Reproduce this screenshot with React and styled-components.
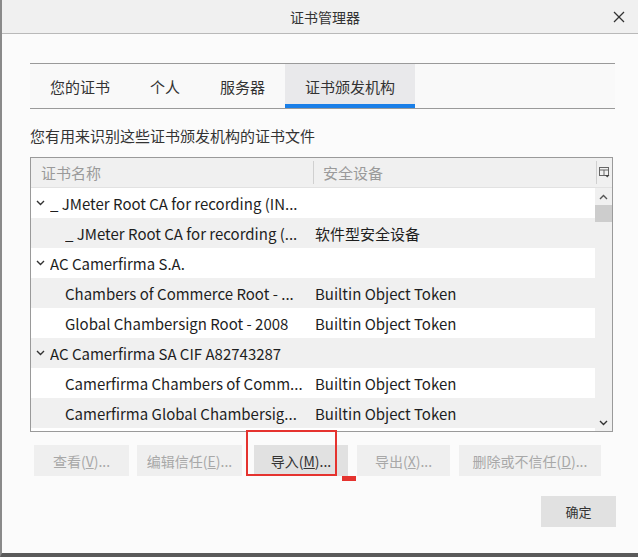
import React from "react";
import styled, { createGlobalStyle } from "styled-components";

const GlobalStyle = createGlobalStyle`
  html, body {
    margin: 0;
    padding: 0;
    background: #fbfbfb;
  }
  * {
    box-sizing: border-box;
  }
`;

const FONT = `"Noto Sans CJK SC", "Noto Sans", sans-serif`;

const Window = styled.div`
  position: relative;
  width: 638px;
  height: 557px;
  display: flex;
  flex-direction: column;
  background: #fbfbfb;
  border-left: 2px solid #8a8a8a;
  border-bottom: 4px solid #5a5a5a;
  font-family: ${FONT};
  color: #333;
  overflow: hidden;
`;

const TitleBar = styled.div`
  height: 34px;
  flex-shrink: 0;
  display: flex;
  align-items: center;
  background: #f0f0f0;
  border-bottom: 1px solid #b9b9b9;
  padding: 0 12px 0 36px;
`;

const Title = styled.div`
  flex: 1;
  text-align: center;
  font-size: 14px;
  color: #333;
`;

const CloseBtn = styled.div`
  width: 14px;
  height: 14px;
  display: flex;
  align-items: center;
  justify-content: center;
`;

const Body = styled.div`
  flex: 1;
  display: flex;
  flex-direction: column;
  padding: 29px 22px 0 28px;
`;

const TabBar = styled.div`
  display: flex;
  height: 46px;
  border-top: 1px solid #9a9a9a;
  border-bottom: 1px solid #9a9a9a;
  background: #f9f9f9;
  margin-right: 1px;
`;

const Tab = styled.div`
  display: flex;
  align-items: center;
  padding: 0 20px;
  font-size: 15px;
  color: #333;
  background: ${(p) => (p.$active ? "#e9e9eb" : "transparent")};
  border-bottom: 4px solid ${(p) => (p.$active ? "#1a7fe8" : "transparent")};
  padding-top: 4px;
`;

const Desc = styled.div`
  margin-top: 16px;
  font-size: 15px;
  line-height: 22px;
  color: #333;
`;

const Tree = styled.div`
  margin-top: 10px;
  width: 583px;
  height: 275px;
  border: 1px solid #9a9a9a;
  background: #fff;
  display: flex;
  flex-direction: column;
  overflow: hidden;
`;

const Header = styled.div`
  height: 30px;
  flex-shrink: 0;
  display: grid;
  grid-template-columns: 283px 283px 15px;
  background: #f0f0f0;
  border-bottom: 1px solid #e2e2e2;
`;

const HeaderCell = styled.div`
  display: flex;
  align-items: center;
  padding-left: ${(p) => p.$pad}px;
  font-size: 15px;
  color: #9a9a9a;
  border-right: ${(p) => (p.$sep ? "1px solid #d0d0d0" : "none")};
  margin: 3px 0;
`;

const PickerCell = styled.div`
  display: flex;
  align-items: center;
  justify-content: center;
`;

const TreeBody = styled.div`
  flex: 1;
  display: flex;
  overflow: hidden;
`;

const Rows = styled.div`
  flex: 1;
  display: flex;
  flex-direction: column;
`;

const Row = styled.div`
  height: 30px;
  flex-shrink: 0;
  display: grid;
  grid-template-columns: 282px 1fr;
  align-items: center;
  background: ${(p) => (p.$odd ? "#f0f0f0" : "#fff")};
  font-size: 15px;
  color: #1e1e1e;
`;

const NameCell = styled.div`
  display: flex;
  align-items: center;
  gap: 5px;
  padding-left: ${(p) => (p.$group ? 5 : 34)}px;
  white-space: nowrap;
  overflow: hidden;
`;

const NameText = styled.span`
  overflow: hidden;
  text-overflow: ellipsis;
`;

const DeviceCell = styled.div`
  padding-left: 2px;
  white-space: nowrap;
`;

const ScrollBar = styled.div`
  width: 17px;
  flex-shrink: 0;
  background: #f0f0f0;
  display: flex;
  flex-direction: column;
  align-items: center;
`;

const ScrollArrow = styled.div`
  height: 17px;
  width: 100%;
  display: flex;
  align-items: center;
  justify-content: center;
`;

const Thumb = styled.div`
  width: 100%;
  height: 17px;
  background: #cdcdcd;
`;

const ScrollSpacer = styled.div`
  flex: 1;
`;

const ButtonRow = styled.div`
  position: relative;
  display: flex;
  margin-top: 13px;
  margin-left: 4px;
`;

const Button = styled.div`
  width: ${(p) => p.$w}px;
  margin-right: ${(p) => p.$gap}px;
  height: 31px;
  display: flex;
  align-items: center;
  justify-content: center;
  font-size: 14px;
  color: ${(p) => (p.$disabled ? "#a8a8a8" : "#333")};
  background: ${(p) => (p.$disabled ? "#efefef" : "#e1e1e1")};
  white-space: nowrap;
`;

const Key = styled.span`
  text-decoration: underline;
`;

const Mark = styled.div`
  position: absolute;
  left: 212px;
  top: -15px;
  width: 91px;
  height: 46px;
  border: 2px solid #e5332f;
`;

const MarkDot = styled.div`
  position: absolute;
  left: 308px;
  top: 31px;
  width: 14px;
  height: 5px;
  background: #e5332f;
`;

const Footer = styled.div`
  display: flex;
  justify-content: flex-end;
  margin-top: 20px;
`;

const OkButton = styled.div`
  width: 75px;
  height: 31px;
  display: flex;
  align-items: center;
  justify-content: center;
  background: #e1e1e1;
  font-size: 13px;
  color: #333;
`;

const Chevron = ({ dir = "down" }) => (
  <svg width="9" height="6" viewBox="0 0 9 6">
    <polyline
      points={dir === "down" ? "1,1 4.5,4.5 8,1" : "1,5 4.5,1.5 8,5"}
      fill="none"
      stroke={dir === "down" ? "#333" : "#555"}
      strokeWidth="1.4"
    />
  </svg>
);

const ColumnPicker = () => (
  <svg width="11" height="11" viewBox="0 0 11 11">
    <rect x="0.5" y="0.5" width="9" height="8" fill="none" stroke="#666" />
    <line x1="0.5" y1="3" x2="9.5" y2="3" stroke="#666" />
    <line x1="5" y1="3" x2="5" y2="8.5" stroke="#666" />
    <polygon points="6,8 10.5,8 8.25,10.5" fill="#444" />
  </svg>
);

const CloseIcon = () => (
  <svg width="12" height="12" viewBox="0 0 12 12">
    <line x1="1" y1="1" x2="11" y2="11" stroke="#333" strokeWidth="1.3" />
    <line x1="11" y1="1" x2="1" y2="11" stroke="#333" strokeWidth="1.3" />
  </svg>
);

const TOKEN = "Builtin Object Token";

const rows = [
  { group: true, name: "_ JMeter Root CA for recording (IN..." },
  { name: "_ JMeter Root CA for recording (...", device: "软件型安全设备" },
  { group: true, name: "AC Camerfirma S.A." },
  { name: "Chambers of Commerce Root - ...", device: TOKEN },
  { name: "Global Chambersign Root - 2008", device: TOKEN },
  { group: true, name: "AC Camerfirma SA CIF A82743287" },
  { name: "Camerfirma Chambers of Comm...", device: TOKEN },
  { name: "Camerfirma Global Chambersig...", device: TOKEN },
  { group: true, name: "ACCV" },
];

const tabs = ["您的证书", "个人", "服务器", "证书颁发机构"];

const buttons = [
  { label: "查看", key: "V", w: 95, gap: 8, disabled: true },
  { label: "编辑信任", key: "E", w: 105, gap: 12, disabled: true },
  { label: "导入", key: "M", w: 94, gap: 9 },
  { label: "导出", key: "X", w: 93, gap: 9, disabled: true },
  { label: "删除或不信任", key: "D", w: 142, gap: 0, disabled: true },
];

const App = () => {
  return (
    <Window>
      <GlobalStyle />
      <TitleBar>
        <Title>证书管理器</Title>
        <CloseBtn>
          <CloseIcon />
        </CloseBtn>
      </TitleBar>
      <Body>
        <TabBar>
          {tabs.map((t, i) => (
            <Tab key={t} $active={i === 3}>
              {t}
            </Tab>
          ))}
        </TabBar>
        <Desc>您有用来识别这些证书颁发机构的证书文件</Desc>
        <Tree>
          <Header>
            <HeaderCell $pad={10} $sep>
              证书名称
            </HeaderCell>
            <HeaderCell $pad={9} $sep>
              安全设备
            </HeaderCell>
            <PickerCell>
              <ColumnPicker />
            </PickerCell>
          </Header>
          <TreeBody>
            <Rows>
              {rows.map((r, i) => (
                <Row key={i} $odd={i % 2 === 1}>
                  <NameCell $group={r.group}>
                    {r.group && <Chevron />}
                    <NameText>{r.name}</NameText>
                  </NameCell>
                  <DeviceCell>{r.device || ""}</DeviceCell>
                </Row>
              ))}
            </Rows>
            <ScrollBar>
              <ScrollArrow>
                <Chevron dir="up" />
              </ScrollArrow>
              <Thumb />
              <ScrollSpacer />
              <ScrollArrow>
                <Chevron />
              </ScrollArrow>
            </ScrollBar>
          </TreeBody>
        </Tree>
        <ButtonRow>
          {buttons.map((b) => (
            <Button key={b.key} $w={b.w} $gap={b.gap} $disabled={b.disabled}>
              {b.label}(<Key>{b.key}</Key>)...
            </Button>
          ))}
          <Mark />
          <MarkDot />
        </ButtonRow>
        <Footer>
          <OkButton>确定</OkButton>
        </Footer>
      </Body>
    </Window>
  );
};

export default App;
